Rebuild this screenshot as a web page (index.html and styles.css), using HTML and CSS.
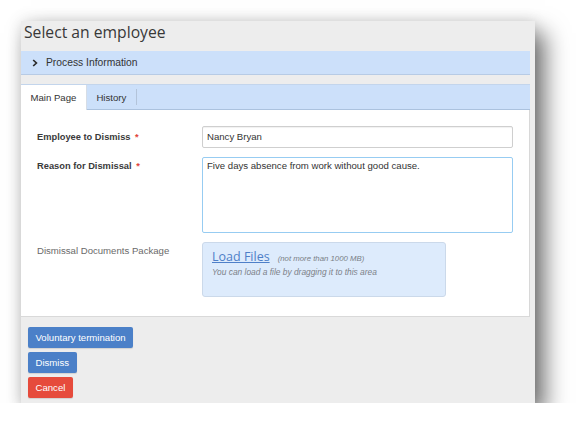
FILE: index.html
```html
<!DOCTYPE html>
<html>
<head>
<meta charset="utf-8">
<link rel="stylesheet" href="styles.css">
</head>
<body>
<div class="window">
  <h1 class="title">Select an employee</h1>
  <div class="section-bar">
    <svg class="chev" width="6" height="8" viewBox="0 0 6 8"><path d="M1.2 1 L4.4 4 L1.2 7" fill="none" stroke="#2b2b2b" stroke-width="1.7"/></svg>
    <span>Process Information</span>
  </div>
  <div class="tabs">
    <div class="tab active">Main Page</div>
    <div class="tab">History</div>
    <span class="tab-sep"></span>
  </div>
  <div class="panel">
    <div class="form">
      <div class="label label-mid">Employee to Dismiss <span class="req">*</span></div>
      <div class="field input">Nancy Bryan</div>
      <div class="label">Reason for Dismissal <span class="req">*</span></div>
      <div class="field textarea">Five days absence from work without good cause.</div>
      <div class="label label-plain">Dismissal Documents Package</div>
      <div class="upload">
        <div class="upload-head"><a class="upload-link">Load Files</a><span class="upload-limit">(not more than 1000 MB)</span></div>
        <div class="upload-hint">You can load a file by dragging it to this area</div>
      </div>
    </div>
  </div>
  <div class="actions">
    <button class="btn btn-blue">Voluntary termination</button>
    <button class="btn btn-blue">Dismiss</button>
    <button class="btn btn-red">Cancel</button>
  </div>
</div>
</body>
</html>
```

FILE: styles.css
```css
html, body {
  margin: 0;
  padding: 0;
  background: #ffffff;
}
body {
  font-family: "Liberation Sans", Arial, sans-serif;
  font-size: 9.6px;
  color: #333333;
  padding: 21px 0 0 21px;
}
.window {
  width: 509px;
  height: 382px;
  padding-right: 5px;
  background: #ededed;
  box-shadow: 10px 12px 22px rgba(0,0,0,0.55), 0 0 14px rgba(0,0,0,0.12);
  display: flex;
  flex-direction: column;
}
.title {
  margin: 0;
  height: 30px;
  padding: 0 3px;
  box-sizing: border-box;
  font-family: "Open Sans", sans-serif;
  font-weight: normal;
  font-size: 15.7px;
  line-height: 22px;
  color: #383838;
}
.section-bar {
  height: 23px;
  border-bottom: 1px solid #b7cbe5;
  background: #cce0fa;
  display: flex;
  align-items: center;
  padding-left: 11px;
  font-size: 10.3px;
  color: #333;
}
.chev {
  margin-right: 8px;
}
.tabs {
  margin-top: 9px;
  height: 24px;
  background: #cce0fa;
  border-top: 1px solid #c3d5ec;
  border-bottom: 1px solid #abc2de;
  display: flex;
  align-items: stretch;
}
.tab {
  padding: 0 9.5px;
  display: flex;
  align-items: center;
  color: #333;
}
.tab.active {
  background: #ffffff;
  margin-bottom: -1px;
  border-right: 1px solid #d6dde6;
}
.tab-sep {
  width: 1px;
  margin: 4px 0 4px 0;
  background: #b3c4da;
}
.panel {
  background: #ffffff;
  border-right: 1px solid #d8d8d8;
  border-bottom: 1px solid #d9d9d9;
  padding: 16px 0 19px 16px;
}
.form {
  display: grid;
  grid-template-columns: 165px 311px;
  row-gap: 9px;
  align-items: start;
}
.label {
  font-weight: bold;
  font-size: 9.3px;
  line-height: 12px;
  padding-top: 2.5px;
  color: #3a3a3a;
}
.label-mid {
  padding-top: 5px;
}
.label-plain {
  font-weight: normal;
  font-size: 9.6px;
  color: #6a6a6a;
}
.req {
  color: #e0453b;
  margin-left: 2px;
}
.field {
  box-sizing: border-box;
  background: #fff;
  color: #333;
  font-size: 9.6px;
  padding: 0 4px;
}
.input {
  height: 22px;
  line-height: 20px;
  border: 1px solid #cfcfcf;
  border-radius: 2px;
  box-shadow: inset 0 1px 1px rgba(0,0,0,0.06);
}
.textarea {
  height: 76px;
  padding-top: 2px;
  line-height: 12px;
  border: 1px solid #97ccf2;
  border-radius: 2px;
}
.upload {
  box-sizing: border-box;
  width: 244px;
  height: 55px;
  background: #ddebfc;
  border: 1px solid #cbd9ea;
  border-radius: 3px;
  padding: 4.5px 9px 0;
}
.upload-head {
  line-height: 17px;
}
.upload-link {
  font-family: "Open Sans", sans-serif;
  font-size: 12.5px;
  color: #4e7fc8;
  text-decoration: underline;
}
.upload-limit {
  margin-left: 8px;
  font-style: italic;
  font-size: 7.8px;
  color: #7a7f86;
}
.upload-hint {
  font-style: italic;
  font-size: 8.4px;
  line-height: 10px;
  color: #7c8188;
}
.actions {
  padding: 10px 0 0 7px;
  display: flex;
  flex-direction: column;
  align-items: flex-start;
  gap: 4px;
}
.btn {
  height: 21px;
  border: none;
  border-radius: 2px;
  padding: 0 7.5px;
  font-family: "Liberation Sans", Arial, sans-serif;
  font-size: 9.6px;
  color: #ffffff;
  line-height: 21px;
  box-shadow: 0 1px 1px rgba(0,0,0,0.12);
}
.btn-blue {
  background: #4b80c8;
}
.btn-red {
  background: #e64b3c;
}
```
